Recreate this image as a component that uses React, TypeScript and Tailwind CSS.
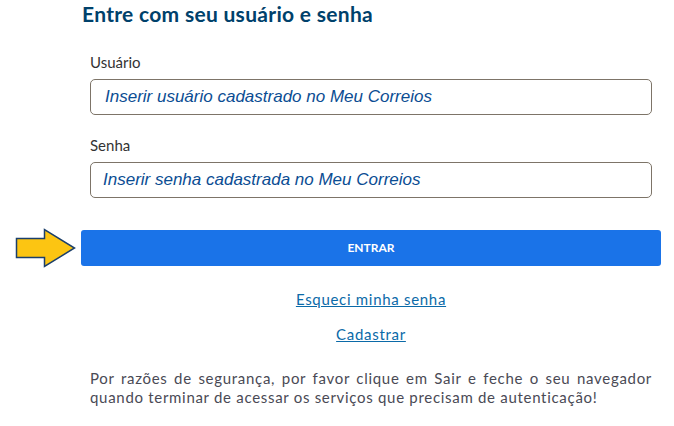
const Arrow = () => (
  <svg width="62" height="40" viewBox="0 0 62 40" className="shrink-0">
    <path
      d="M1.5 10.5 H29.5 V1.5 L59.5 20 L29.5 38.5 V29.5 H1.5 Z"
      fill="#fcc512"
      stroke="#1b3f6b"
      strokeWidth="1.5"
      strokeLinejoin="miter"
    />
  </svg>
);

const Field = ({ label, placeholder, inset }: { label: string; placeholder: string; inset: string }) => (
  <div className="flex flex-col">
    <label className="h-[24px] text-[15px] leading-[24px] text-[#333]">{label}</label>
    <div className={`mt-[5px] flex h-[36px] items-center rounded-[5px] border border-[#7d7468] ${inset}`}>
      <span
        className="text-[17px] italic text-[#0b4d93]"
        style={{ fontFamily: '"Liberation Sans", Arial, sans-serif' }}
      >
        {placeholder}
      </span>
    </div>
  </div>
);

export default function App() {
  return (
    <div
      className="min-h-screen w-[674px] bg-white pl-[15px]"
      style={{ fontFamily: 'Lato, "Open Sans", sans-serif' }}
    >
      <div className="ml-[66px] w-[580px]">
        <h1 className="h-[27px] pl-[1px] text-[21px] font-bold leading-[27px] tracking-[0.3px] text-[#00416b]">
          Entre com seu usuário e senha
        </h1>
        <div className="flex flex-col gap-[18px] px-[9px] pt-[23px]">
          <Field label="Usuário" placeholder="Inserir usuário cadastrado no Meu Correios" inset="pl-[14px]" />
          <Field label="Senha" placeholder="Inserir senha cadastrada no Meu Correios" inset="pl-[12px]" />
        </div>
      </div>

      <div className="mt-[30px] flex items-center gap-[4px]">
        <Arrow />
        <button className="flex h-[36px] w-[580px] items-center justify-center rounded-[3px] bg-[#1a73e8] text-[12px] font-bold text-white">
          ENTRAR
        </button>
      </div>

      <div className="ml-[66px] w-[580px]">
        <div className="flex flex-col items-center gap-[13px] pt-[20px] text-[15px] leading-[22px] tracking-[0.7px]">
          <a className="text-[#0b6aa8] underline">Esqueci minha senha</a>
          <a className="text-[#0b6aa8] underline">Cadastrar</a>
        </div>
        <p className="mt-[24px] px-[9px] text-justify text-[15px] leading-[19px] tracking-[0.7px] text-[#4a4a55]">
          Por razões de segurança, por favor clique em Sair e feche o seu navegador quando terminar de acessar os
          serviços que precisam de autenticação!
        </p>
      </div>
    </div>
  );
}
